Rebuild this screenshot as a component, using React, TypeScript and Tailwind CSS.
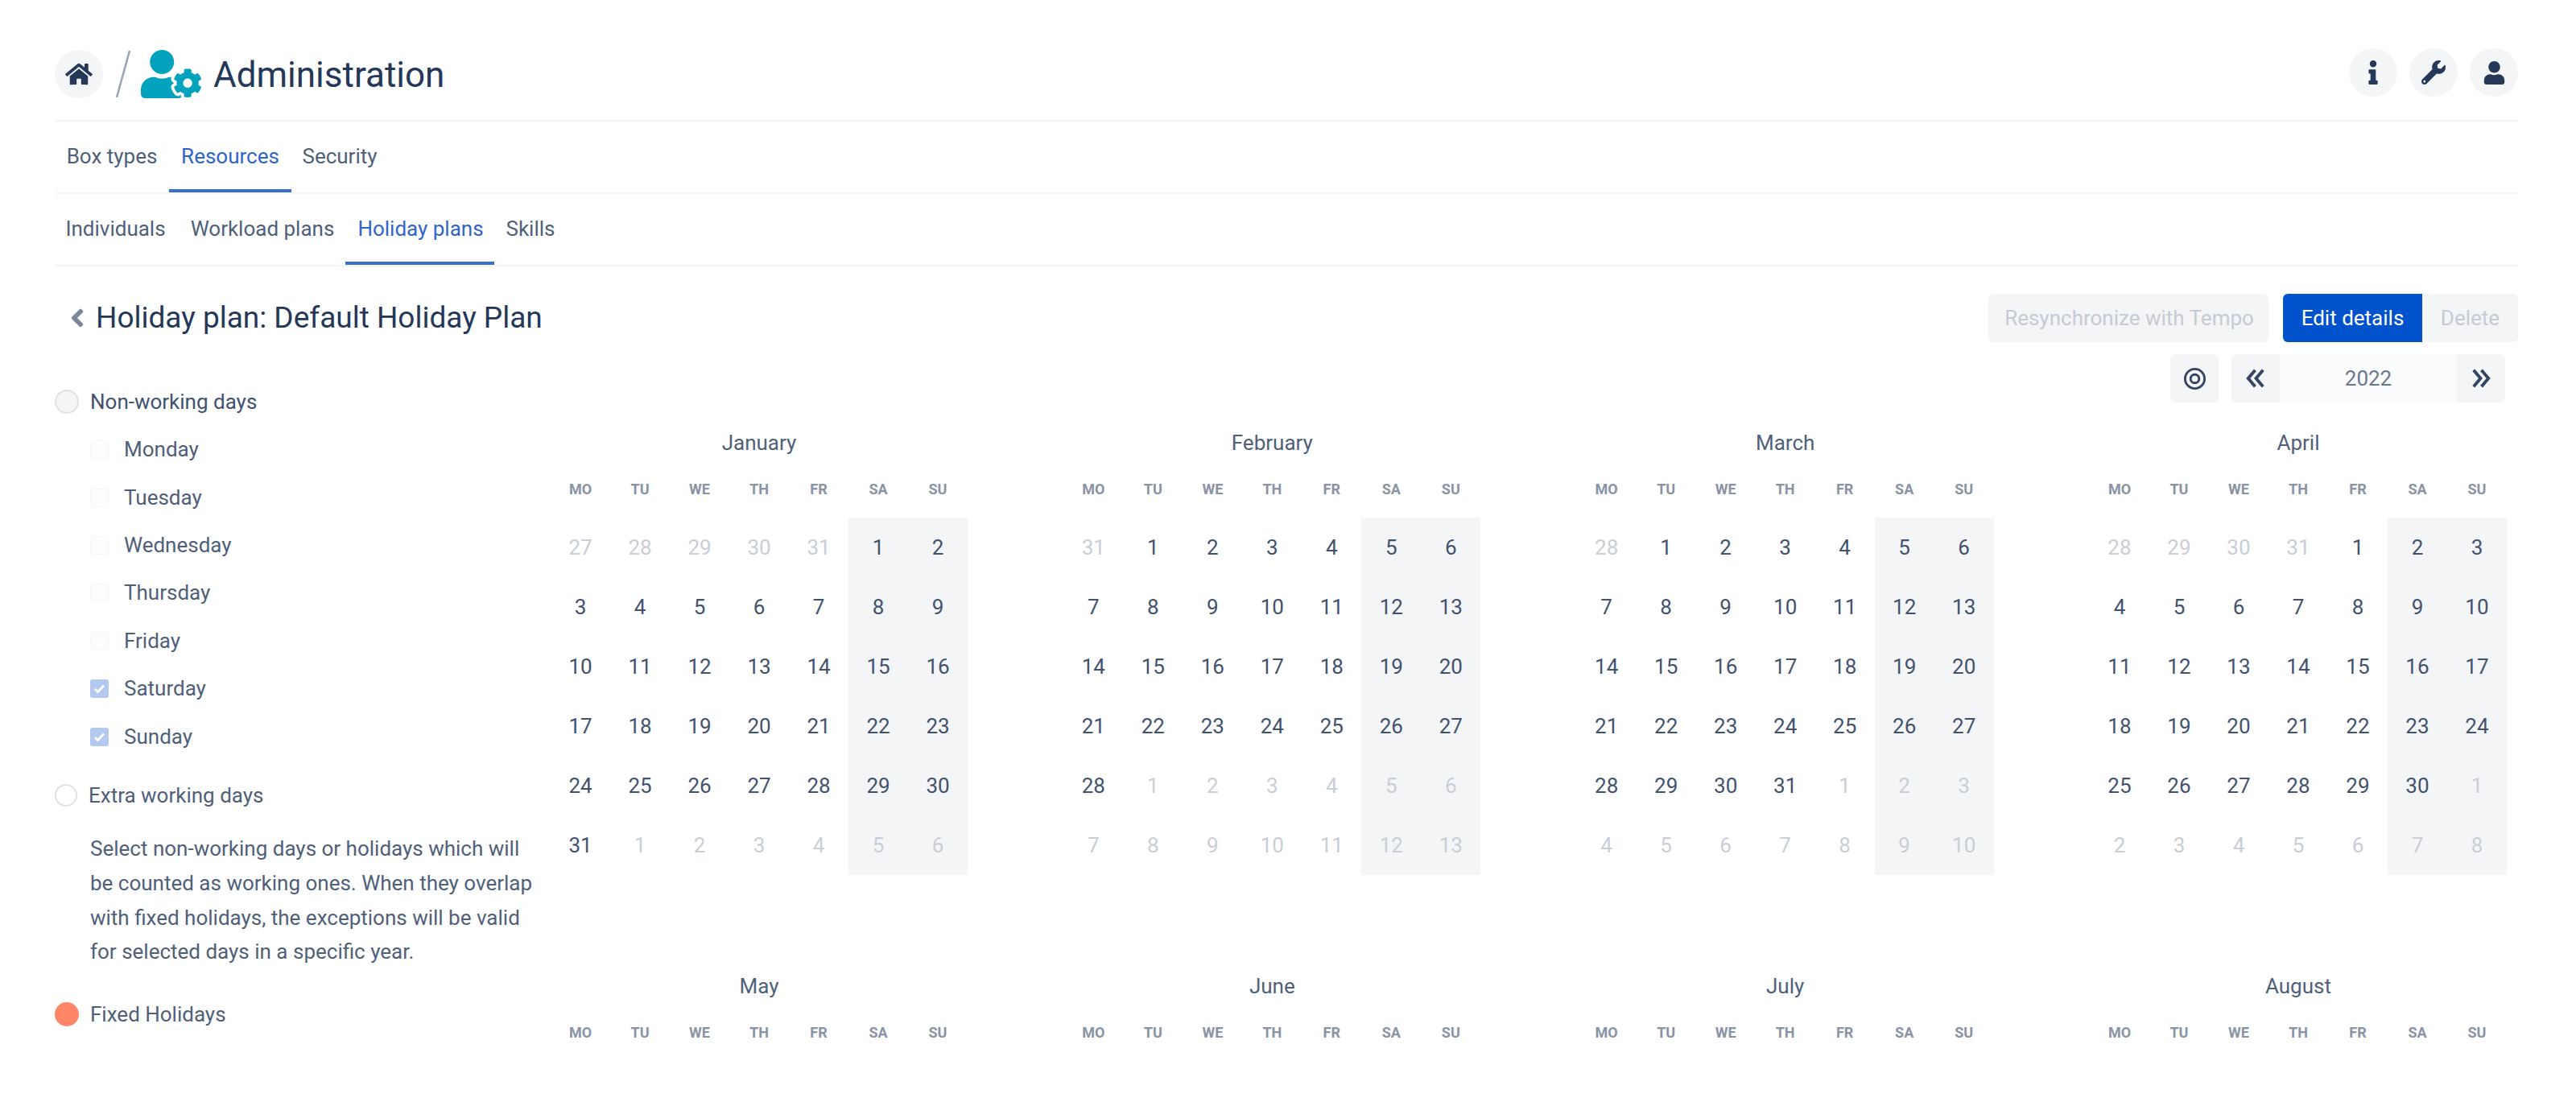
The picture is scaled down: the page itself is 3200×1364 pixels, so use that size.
import { FaAngleLeft, FaHome, FaInfo, FaUser, FaUserCog, FaWrench } from 'react-icons/fa'
import type { ReactNode } from 'react'

const WEEKDAYS = ['MO', 'TU', 'WE', 'TH', 'FR', 'SA', 'SU']
const DAY_OPTIONS = [
  { label: 'Monday', checked: false },
  { label: 'Tuesday', checked: false },
  { label: 'Wednesday', checked: false },
  { label: 'Thursday', checked: false },
  { label: 'Friday', checked: false },
  { label: 'Saturday', checked: true },
  { label: 'Sunday', checked: true },
]
const TOP_MONTHS = [
  { name: 'January', index: 0 },
  { name: 'February', index: 1 },
  { name: 'March', index: 2 },
  { name: 'April', index: 3 },
]
const BOTTOM_MONTHS = ['May', 'June', 'July', 'August']

function monthCells(month: number) {
  const first = new Date(2022, month, 1)
  const offset = (first.getDay() + 6) % 7
  return Array.from({ length: 42 }, (_, i) => {
    const date = new Date(2022, month, 1 - offset + i)
    return { day: date.getDate(), inMonth: date.getMonth() === month, weekend: i % 7 > 4 }
  })
}

function RoundButton({ children }: { children: ReactNode }) {
  return (
    <div className="flex h-[60px] w-[60px] items-center justify-center rounded-full bg-[#f4f5f7] text-[#253858]">
      {children}
    </div>
  )
}

function Tab({ label, active, className }: { label: string; active?: boolean; className: string }) {
  return (
    <div
      className={`flex h-full items-center justify-center border-b-[4px] pt-[3px] ${className} ${
        active ? 'border-[#3a6fd0] text-[#2f65cb]' : 'border-transparent text-[#505f79]'
      }`}
    >
      {label}
    </div>
  )
}

function WeekdayRow() {
  return (
    <div className="grid h-[69px] grid-cols-7 items-center pb-[3px] text-center text-[18px] font-bold text-[#8993a4]">
      {WEEKDAYS.map((day) => (
        <div key={day}>{day}</div>
      ))}
    </div>
  )
}

function Month({ name, index }: { name: string; index: number }) {
  return (
    <div className="w-[518px]">
      <div className="flex h-[48px] items-center justify-center text-[26px] text-[#505f79]">{name}</div>
      <WeekdayRow />
      <div className="grid grid-cols-7">
        {monthCells(index).map((cell, i) => (
          <div
            key={i}
            className={`flex h-[74px] items-center justify-center text-[26px] ${cell.weekend ? 'bg-[#f4f5f7]' : ''} ${
              cell.inMonth ? 'text-[#42526e]' : 'text-[#c9ced6]'
            }`}
          >
            {cell.day}
          </div>
        ))}
      </div>
    </div>
  )
}

function DayOption({ label, checked }: { label: string; checked: boolean }) {
  return (
    <div className="flex h-[59.4px] items-center">
      <div
        className={`flex h-[23px] w-[23px] items-center justify-center rounded-[3px] ${
          checked ? 'bg-[#b3c9ef]' : 'border border-[#f6f7f8] bg-[#fdfdfe]'
        }`}
      >
        {checked && (
          <svg viewBox="0 0 24 24" className="h-[19px] w-[19px]" fill="none" stroke="#ffffff" strokeWidth="3.5">
            <path d="M5 12.5l4.5 4.5L19 7" />
          </svg>
        )}
      </div>
      <span className="ml-[19px] text-[#505f79]">{label}</span>
    </div>
  )
}

function DoubleChevron({ flip }: { flip?: boolean }) {
  return (
    <svg
      viewBox="0 0 24 24"
      className={`h-[26px] w-[26px] ${flip ? 'rotate-180' : ''}`}
      fill="none"
      stroke="currentColor"
      strokeWidth="3.6"
    >
      <path d="M11.5 2.5L3.5 12l8 9.5M20.5 2.5l-8 9.5 8 9.5" />
    </svg>
  )
}

export default function App() {
  return (
    <div className="h-[1364px] w-[3200px] overflow-hidden bg-white pl-[68px] pr-[72px] font-['Roboto',sans-serif] text-[26px] text-[#42526e]">
      <header className="flex h-[151px] items-start justify-between border-b-2 border-[#f4f5f7] pt-[60px]">
        <div className="flex items-center">
          <RoundButton>
            <FaHome className="h-[30px] w-[34px]" />
          </RoundButton>
          <svg viewBox="0 0 20 60" className="ml-[15px] h-[60px] w-[20px]" fill="none" stroke="#9aa3b3" strokeWidth="2.5">
            <path d="M18 1L2 59" />
          </svg>
          <FaUserCog className="ml-[12px] h-[60px] w-[75px] text-[#04a3bd]" />
          <h1 className="ml-[15px] pt-[3px] text-[44px] font-normal leading-[60px] text-[#253858]">Administration</h1>
        </div>
        <div className="flex gap-[15px]">
          <RoundButton>
            <FaInfo className="h-[30px] w-[16px]" />
          </RoundButton>
          <RoundButton>
            <FaWrench className="h-[30px] w-[30px]" />
          </RoundButton>
          <RoundButton>
            <FaUser className="h-[29px] w-[27px]" />
          </RoundButton>
        </div>
      </header>

      <nav className="flex h-[90px] border-b-2 border-[#f4f5f7]">
        <Tab label="Box types" className="w-[142px]" />
        <Tab label="Resources" active className="w-[152px]" />
        <Tab label="Security" className="w-[120px]" />
      </nav>

      <nav className="flex h-[90px] border-b-2 border-[#f4f5f7]">
        <Tab label="Individuals" className="w-[151px]" />
        <Tab label="Workload plans" className="w-[210px] pl-[4px]" />
        <Tab label="Holiday plans" active className="w-[185px] pl-[2px]" />
        <Tab label="Skills" className="w-[100px] -ml-[5px]" />
      </nav>

      <div className="flex h-[94px] items-end justify-between">
        <div className="flex h-[60px] items-center">
          <FaAngleLeft className="ml-[17px] h-[36px] w-[22px] text-[#7a869a]" />
          <h2 className="ml-[12px] text-[37px] font-normal text-[#253858]">Holiday plan: Default Holiday Plan</h2>
        </div>
        <div className="flex">
          <div className="flex h-[60px] w-[348px] items-center justify-center rounded-[6px] bg-[#f4f5f7] pl-[2px] text-[#c6cad3]">
            Resynchronize with Tempo
          </div>
          <div className="ml-[18px] flex h-[60px] w-[173px] items-center justify-center rounded-l-[6px] bg-[#0052cc] text-white">
            Edit details
          </div>
          <div className="flex h-[60px] w-[119px] items-center justify-center rounded-r-[6px] bg-[#f4f5f7] text-[#c6cad3]">
            Delete
          </div>
        </div>
      </div>

      <div className="flex">
        <aside className="w-[616px] pt-[59px]">
          <div className="flex h-[30px] items-center">
            <div className="h-[30px] w-[30px] rounded-full border-2 border-[#dfe1e6] bg-[#f4f5f7]" />
            <span className="ml-[14px] text-[#42526e]">Non-working days</span>
          </div>
          <div className="ml-[44px] mt-[15px]">
            {DAY_OPTIONS.map((option) => (
              <DayOption key={option.label} label={option.label} checked={option.checked} />
            ))}
          </div>
          <div className="mt-[28.6px] flex h-[30px] items-center">
            <div className="h-[28px] w-[28px] rounded-full border-2 border-[#dfe1e6] bg-white" />
            <span className="ml-[14px] text-[#505f79]">Extra working days</span>
          </div>
          <p className="ml-[44px] mt-[30px] w-[550px] leading-[42.7px] text-[#505f79]">
            Select non-working days or holidays which will be counted as working ones. When they overlap with fixed
            holidays, the exceptions will be valid for selected days in a specific year.
          </p>
          <div className="mt-[41px] flex h-[30px] items-center">
            <div className="h-[30px] w-[30px] rounded-full bg-[#ff8567]" />
            <span className="ml-[14px] text-[#505f79]">Fixed Holidays</span>
          </div>
        </aside>

        <main className="w-[2430px]">
          <div className="flex justify-end pt-[15px]">
            <div className="flex h-[60px] w-[60px] items-center justify-center rounded-[6px] bg-[#f4f5f7] text-[#344563]">
              <svg viewBox="0 0 30 30" className="h-[29px] w-[29px]" fill="none" stroke="currentColor" strokeWidth="3">
                <circle cx="15" cy="15" r="12.5" />
                <circle cx="15" cy="15" r="5.5" />
              </svg>
            </div>
            <div className="ml-[16px] flex h-[60px] w-[60px] items-center justify-center rounded-l-[6px] bg-[#f4f5f7] text-[#344563]">
              <DoubleChevron />
            </div>
            <div className="flex h-[60px] w-[220px] items-center justify-center bg-[#fafbfc] text-[#6b778c]">2022</div>
            <div className="mr-[2px] flex h-[60px] w-[60px] items-center justify-center rounded-r-[6px] bg-[#f4f5f7] text-[#344563]">
              <DoubleChevron flip />
            </div>
          </div>
          <div className="mt-[26px] flex justify-between">
            {TOP_MONTHS.map((month) => (
              <Month key={month.name} name={month.name} index={month.index} />
            ))}
          </div>
          <div className="mt-[114px] flex justify-between">
            {BOTTOM_MONTHS.map((name) => (
              <div key={name} className="w-[518px]">
                <div className="flex h-[48px] items-center justify-center text-[26px] text-[#505f79]">{name}</div>
                <WeekdayRow />
              </div>
            ))}
          </div>
        </main>
      </div>
    </div>
  )
}
